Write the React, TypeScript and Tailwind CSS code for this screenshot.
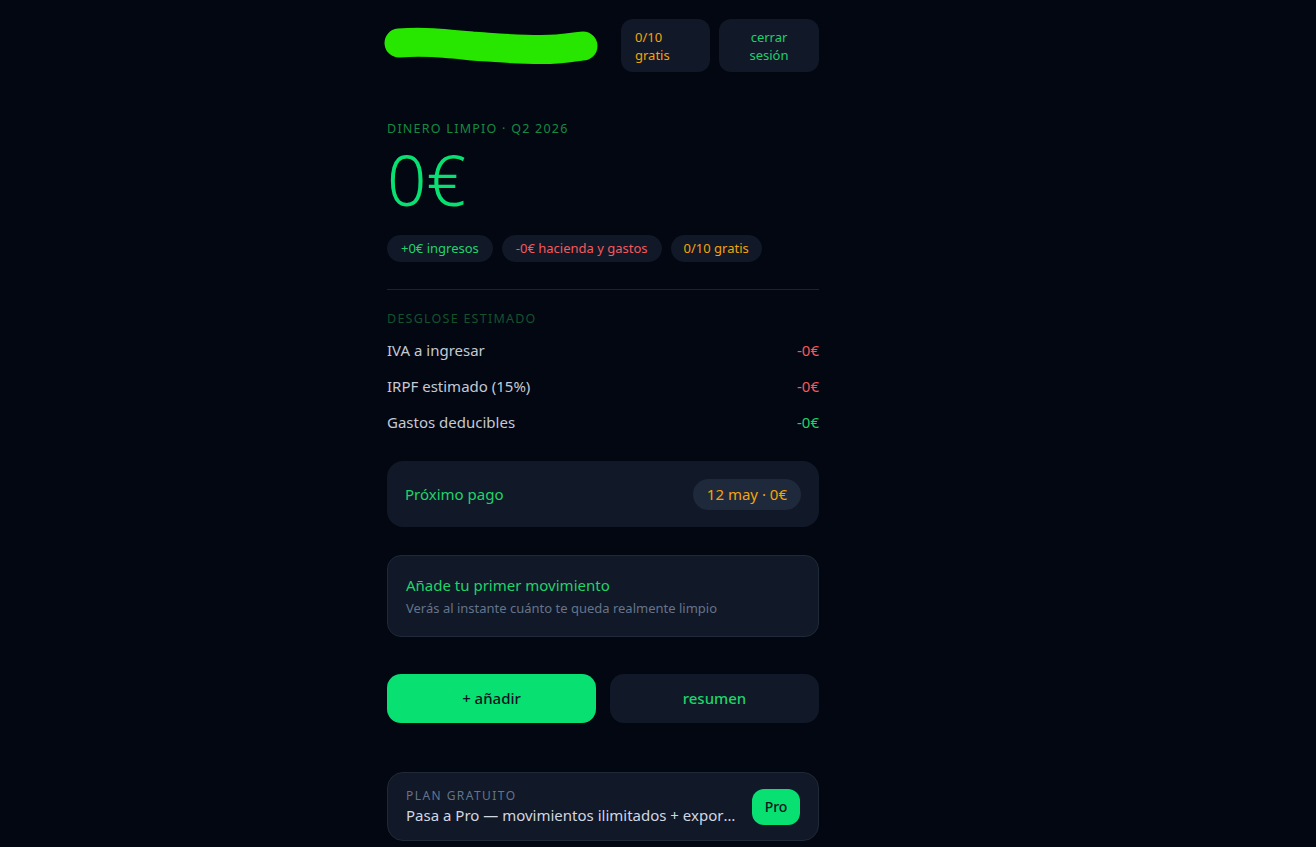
import React from "react";

export default function App() {
  return (
    <div
      className="min-h-[847px] w-full bg-[#030712] text-[15px]"
      style={{ fontFamily: '"Noto Sans", "Open Sans", sans-serif' }}
    >
      <div className="ml-[387px] w-[432px] pt-[19px] pb-[6px]">
        {/* header */}
        <div className="flex items-center h-[53px]">
          <svg width="222" height="53" viewBox="0 0 222 53" className="-ml-[5px]">
            <path
              d="M17 24 C 40 22, 60 24, 90 27 C 120 29, 150 32, 175 30 C 190 29, 198 27, 201 27"
              stroke="#27e600"
              strokeWidth="29"
              strokeLinecap="round"
              fill="none"
            />
          </svg>
          <div className="ml-auto flex gap-[9px]">
            <div className="w-[89px] h-[53px] rounded-[12px] bg-[#111827] px-[14px] flex flex-col justify-center text-[13px] leading-[18px] text-[#f5a30b]">
              <span>0/10</span>
              <span>gratis</span>
            </div>
            <div className="w-[100px] h-[53px] rounded-[12px] bg-[#111827] flex flex-col items-center justify-center text-[13px] leading-[18px] text-[#1fcf6c]">
              <span>cerrar</span>
              <span>sesión</span>
            </div>
          </div>
        </div>

        {/* hero */}
        <div className="mt-[49px] text-[12.5px] leading-[16px] tracking-[0.1em] text-[#168a43]">
          DINERO LIMPIO · Q2 2026
        </div>
        <div className="mt-[5px] text-[69px] leading-[74px] font-light text-[#08e072]">0€</div>

        <div className="mt-[19px] flex gap-[9px] text-[13px]">
          <span className="h-[27px] px-[14px] rounded-full bg-[#111827] flex items-center text-[#22d36d]">
            +0€ ingresos
          </span>
          <span className="h-[27px] px-[14px] rounded-full bg-[#111827] flex items-center text-[#f5585d]">
            -0€ hacienda y gastos
          </span>
          <span className="h-[27px] px-[13px] rounded-full bg-[#111827] flex items-center text-[#f5a30b]">
            0/10 gratis
          </span>
        </div>

        <div className="mt-[27px] h-px bg-[#1c2331]" />

        <div className="mt-[21px] text-[12.5px] leading-[16px] tracking-[0.1em] text-[#14532d]">
          DESGLOSE ESTIMADO
        </div>

        <div className="mt-[5px] flex flex-col text-[#c3cad5]">
          <div className="flex justify-between h-[36px] items-center">
            <span>IVA a ingresar</span>
            <span className="text-[#f5585d]">-0€</span>
          </div>
          <div className="flex justify-between h-[36px] items-center">
            <span>IRPF estimado (15%)</span>
            <span className="text-[#f5585d]">-0€</span>
          </div>
          <div className="flex justify-between h-[36px] items-center">
            <span>Gastos deducibles</span>
            <span className="text-[#1fd36a]">-0€</span>
          </div>
        </div>

        {/* next payment */}
        <div className="mt-[21px] h-[66px] rounded-[16px] bg-[#111827] px-[18px] flex items-center justify-between">
          <span className="text-[#1fd36a]">Próximo pago</span>
          <span className="h-[31px] px-[14px] rounded-full bg-[#1e293b] flex items-center text-[#f5a30b]">
            12 may · 0€
          </span>
        </div>

        {/* empty state */}
        <div className="mt-[28px] h-[82px] rounded-[14px] bg-[#111827] border border-[#1f2937] px-[18px] flex flex-col justify-center">
          <span className="text-[#1fd36a] leading-[20px]">Añade tu primer movimiento</span>
          <span className="mt-[5px] text-[13px] leading-[17px] text-[#64748b]">
            Verás al instante cuánto te queda realmente limpio
          </span>
        </div>

        {/* buttons */}
        <div className="mt-[37px] grid grid-cols-2 gap-[14px]">
          <button className="h-[49px] rounded-[14px] bg-[#08e072] text-[#0b1220] font-medium">
            + añadir
          </button>
          <button className="h-[49px] rounded-[14px] bg-[#111827] text-[#1fd36a] font-medium">
            resumen
          </button>
        </div>

        {/* plan */}
        <div className="mt-[49px] h-[69px] rounded-[16px] bg-[#111827] border border-[#1f2937] pl-[18px] pr-[18px] flex items-center gap-[14px]">
          <div className="flex-1 min-w-0 flex flex-col">
            <span className="text-[12px] leading-[16px] tracking-[0.12em] text-[#64748b]">
              PLAN GRATUITO
            </span>
            <span className="truncate leading-[22px] text-[#d1d7e0]">
              Pasa a Pro — movimientos ilimitados + exportación a tu gestor
            </span>
          </div>
          <button className="w-[48px] h-[36px] shrink-0 rounded-[12px] bg-[#08e072] text-[14px] text-[#0b1220] font-medium">
            Pro
          </button>
        </div>
      </div>
    </div>
  );
}
